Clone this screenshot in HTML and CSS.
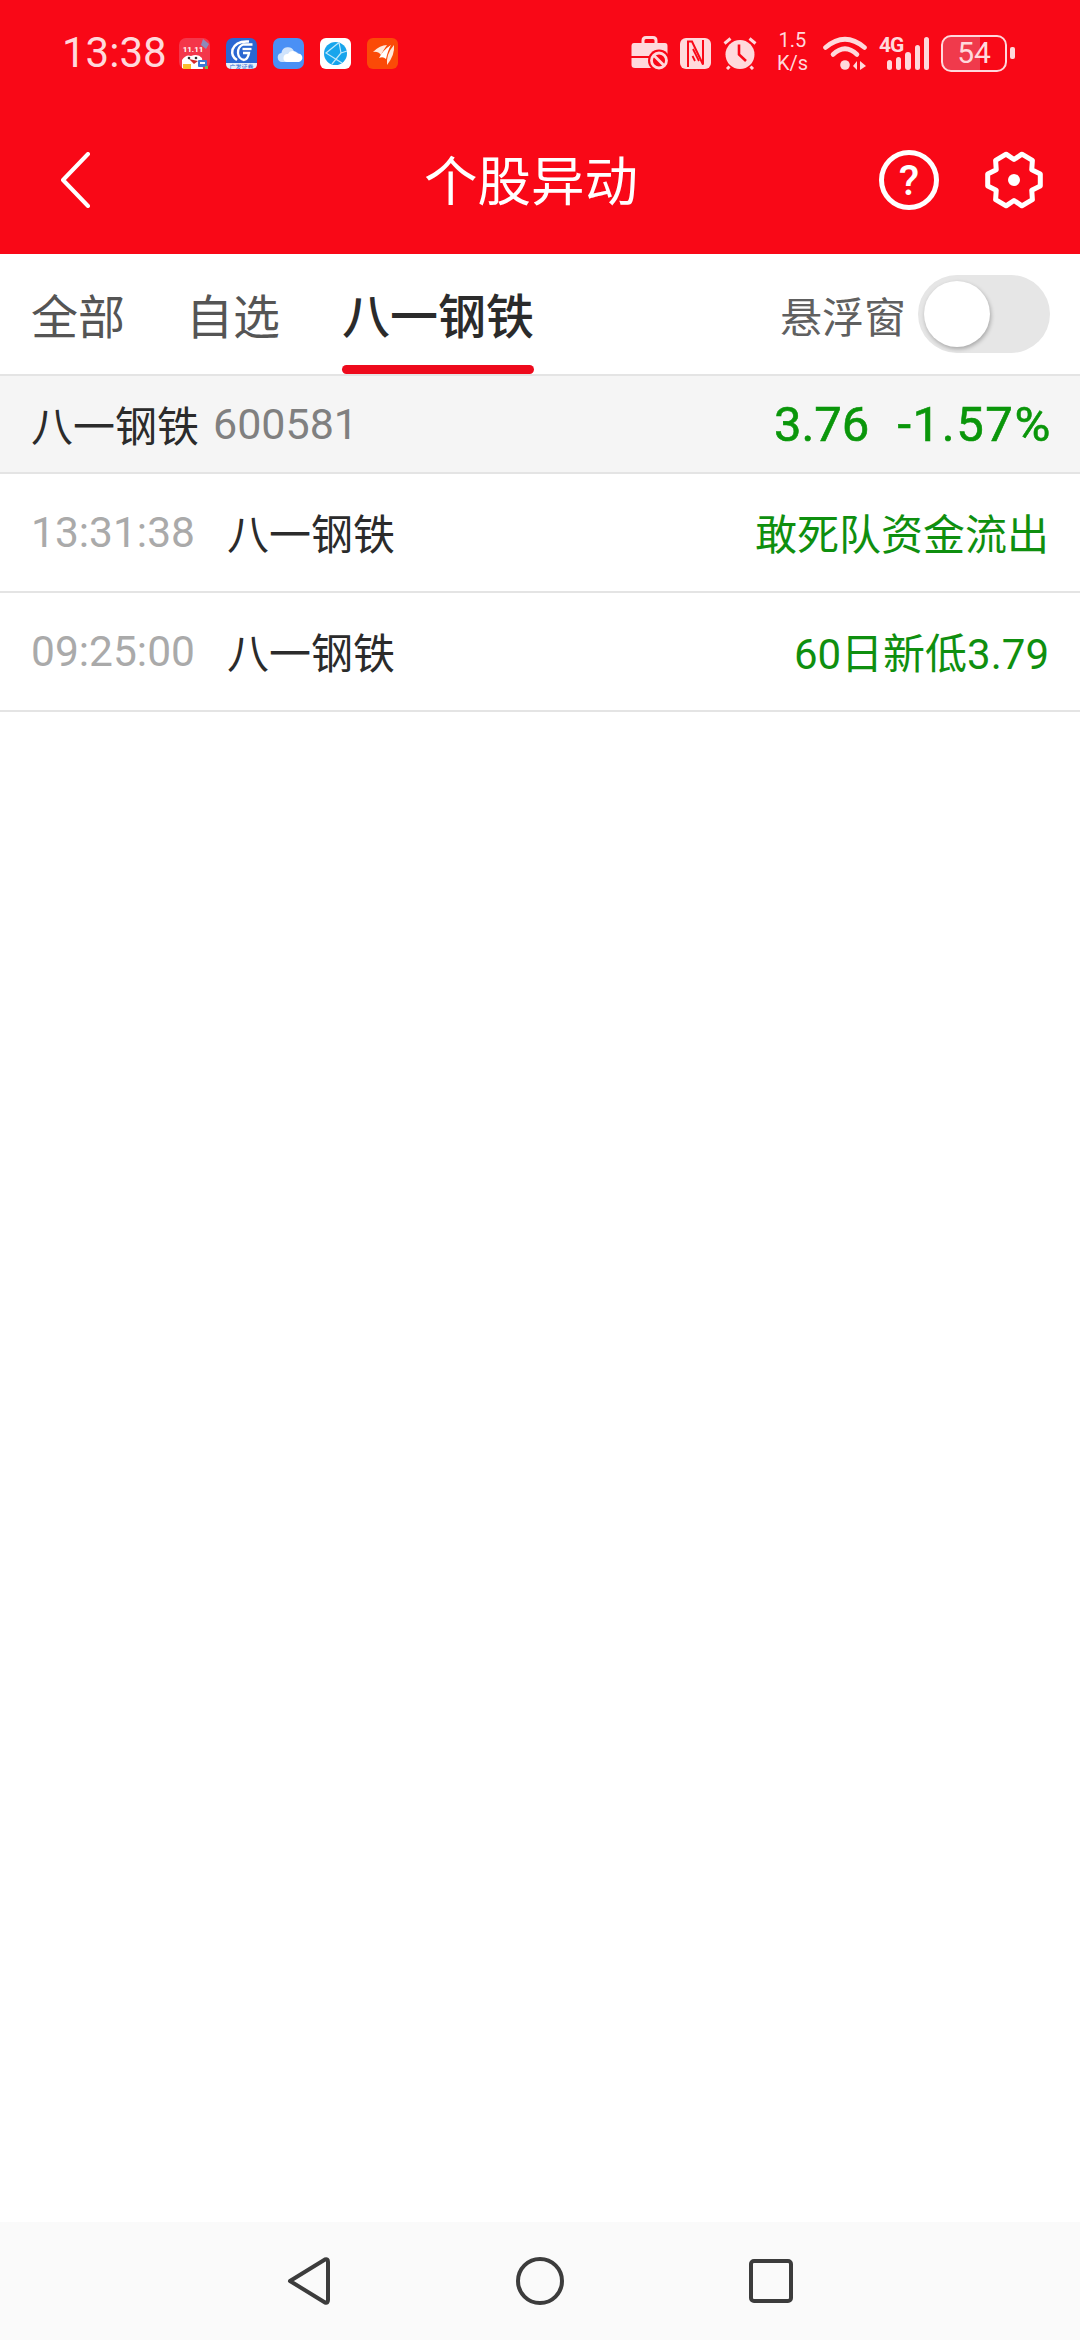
FILE: index.html
```html
<!DOCTYPE html>
<html lang="zh-CN">
<head>
    <meta charset="UTF-8">
    <meta name="viewport" content="width=device-width, initial-scale=1.0">
    <title>个股异动</title>
    <link rel="stylesheet" href="styles.css">
</head>
<body>
    <div id="page">
        <div class="top">
            <!-- status bar -->
            <div class="status">
                <span class="clock">13:38</span>
                <div class="apps">
                    <svg class="app" viewBox="0 0 31 31">
                        <rect width="31" height="31" rx="7" fill="#f4364a"/>
                        <path d="M24 1 30 6 27 11 22 7Z" fill="#8e8ab8"/>
                        <text class="app-sale" x="14" y="14">11.11</text>
                        <path d="M3 30 3 22Q7 16 12 18 19 15 23 20L24 31H5Z" fill="#fff"/>
                        <path d="M10 21 19 23 15 26Z" fill="#d32a2a"/>
                        <circle cx="10" cy="20" r="1.300" fill="#333"/>
                        <circle cx="17" cy="20" r="1.300" fill="#333"/>
                        <rect x="4" y="26" width="8" height="5" fill="#f9bd2c"/>
                        <rect x="19" y="22" width="9" height="7" rx="1" fill="#3d7bd6"/>
                        <rect x="21" y="24" width="5" height="2" fill="#fff"/>
                        <rect x="26" y="28" width="3" height="3" fill="#7cc04b"/>
                    </svg>
                    <svg class="app" viewBox="0 0 31 31">
                        <rect width="31" height="31" rx="7" fill="#2b67d2"/>
                        <path d="M0 25H31V26Q31 31 25 31H6Q0 31 0 26Z" fill="#e6effb"/>
                        <text class="app-broker" x="15.500" y="30.500">广发证券</text>
                        <path d="M23 3.500Q10 2.500 6.500 11.500 5 18.500 11 22" fill="none" stroke="#fff" stroke-width="2.500"/>
                        <path d="M26.500 6.500H17Q11.500 9 12 15 12.500 21 18 22 22 21 23 15H17" fill="none" stroke="#fff" stroke-width="2.300"/>
                        <path d="M25.500 11H16.500" stroke="#fff" stroke-width="2.300"/>
                    </svg>
                    <svg class="app" viewBox="0 0 31 31">
                        <rect width="31" height="31" rx="7" fill="#4a90f5"/>
                        <path d="M9 24a4.600 4.600 0 0 1-.6-9.100 6.600 6.600 0 0 1 12.600-1.700 5.500 5.500 0 0 1 1 10.800Z" fill="#cfe3fc"/>
                        <path d="M14 24a4 4 0 0 1 1-8 5 5 0 0 1 9-.5 4.300 4.300 0 0 1 2 8.500Z" fill="#fff"/>
                    </svg>
                    <svg class="app" viewBox="0 0 31 31">
                        <rect width="31" height="31" rx="6" fill="#fff"/>
                        <circle cx="15.500" cy="15.500" r="11.500" fill="#17a5ec"/>
                        <path d="M19 4.500 6 15 22 25M19 4.500 21 15 12 26M21 15 27 13" fill="none" stroke="#bfe8fb" stroke-width="1.200"/>
                    </svg>
                    <svg class="app" viewBox="0 0 31 31">
                        <rect width="31" height="31" rx="6" fill="#fb4a07"/>
                        <path d="M6 14Q13 7 20 7 17 11 14 17 11 13 6 14Z" fill="#ffe9dc"/>
                        <path d="M12 20Q16 12 24 7 21 12 19 21 16 18 12 20Z" fill="#fff"/>
                        <path d="M20 27Q19 16 27 7 28 17 20 27Z" fill="#ffe9dc"/>
                    </svg>
                </div>
                <div class="indicators">
                    <svg class="ind-case" viewBox="0 0 37 34">
                        <path d="M12 8V4.500Q12 1.500 15 1.500H22Q25 1.500 25 4.500V8" fill="none" stroke="currentColor" stroke-width="3"/>
                        <path d="M3 7H34Q36.500 7 36.500 10V20H0.500V10Q0.500 7 3 7Z" fill="currentColor"/>
                        <path d="M0.500 22H20V32H4Q0.500 32 0.500 29Z" fill="currentColor"/>
                        <circle cx="28" cy="24.500" r="11" fill="#f90817"/>
                        <circle cx="28" cy="24.500" r="7.500" fill="none" stroke="currentColor" stroke-width="2.800"/>
                        <path d="M23 19.500 33 29.500" stroke="currentColor" stroke-width="2.800"/>
                    </svg>
                    <svg class="ind-nfc" viewBox="0 0 31 31">
                        <rect width="31" height="31" rx="6" fill="currentColor"/>
                        <path d="M8 29V3.500H12L23 26.500V2" fill="none" stroke="#f90817" stroke-width="2"/>
                        <path d="M13 11 19 23M12.500 18 15 23" stroke="#f90817" stroke-width="1.800"/>
                    </svg>
                    <svg class="ind-alarm" viewBox="0 0 34 34">
                        <circle cx="17" cy="18.500" r="14.500" fill="currentColor"/>
                        <path d="M16 8.500V18.500L23 25" fill="none" stroke="#f90817" stroke-width="2.600"/>
                        <path d="M1.500 7.500 7.500 2.500M32.500 7.500 26.500 2.500M6.500 30.500 4 33M27.500 30.500 30 33" stroke="currentColor" stroke-width="3"/>
                    </svg>
                    <div class="speed">1.5<br>K/s</div>
                    <svg class="ind-wifi" viewBox="0 0 44 34">
                        <path d="M2.500 11.500Q22 -5 41.500 11.500" fill="none" stroke="currentColor" stroke-width="4.600" stroke-linecap="round"/>
                        <path d="M10 18.500Q22 7 34 18.500" fill="none" stroke="currentColor" stroke-width="4.600" stroke-linecap="round"/>
                        <circle cx="22" cy="29" r="4.800" fill="currentColor"/>
                        <path d="M30 30 34 25V34ZM37 25 43 30 37 34Z" fill="currentColor"/>
                    </svg>
                    <div class="signal">
                        <span class="net">4G</span>
                        <i class="s1"></i><i class="s2"></i><i class="s3"></i><i class="s4"></i><i class="s5"></i>
                    </div>
                    <div class="battery">
                        <div class="shell"><span>54</span></div>
                        <div class="nub"></div>
                    </div>
                </div>
            </div>
            <!-- title bar -->
            <div class="titlebar">
                <svg class="back" viewBox="0 0 30 56">
                    <path d="M27 2 2 28 27 54" fill="none" stroke="#fff" stroke-width="4" stroke-linecap="round" stroke-linejoin="round"/>
                </svg>
                <h1>个股异动</h1>
                <div class="actions">
                    <svg class="ico-help" viewBox="0 0 60 60">
                        <circle cx="30" cy="30" r="27.500" fill="none" stroke="#fff" stroke-width="5"/>
                        <text x="30" y="45" text-anchor="middle">?</text>
                    </svg>
                    <svg class="ico-gear" viewBox="0 0 60 60">
                        <path d="M56.300 23.900 47.750 19.750 48.400 10.300 37.900 4.200 30 9.500 22.100 4.200 11.600 10.300 12.250 19.750 3.700 23.900V36.100L12.250 40.250 11.600 49.700 22.100 55.800 30 50.500 37.900 55.800 48.400 49.700 47.750 40.250 56.300 36.100Z" fill="none" stroke="#fff" stroke-width="5" stroke-linejoin="round"/>
                        <circle cx="30" cy="30" r="6" fill="#fff"/>
                    </svg>
                </div>
            </div>
        </div>

        <div class="tabs">
            <span class="tab">全部</span>
            <span class="tab">自选</span>
            <span class="tab active">八一钢铁</span>
            <div class="float-opt">
                <span>悬浮窗</span>
                <div class="toggle"><div class="knob"></div></div>
            </div>
        </div>

        <div class="stock">
            <span class="stock-name">八一钢铁</span>
            <span class="stock-code">600581</span>
            <span class="stock-price">3.76</span>
            <span class="stock-pct">-1.57%</span>
        </div>

        <div class="row">
            <span class="time">13:31:38</span>
            <span class="name">八一钢铁</span>
            <span class="event">敢死队资金流出</span>
        </div>
        <div class="row">
            <span class="time">09:25:00</span>
            <span class="name">八一钢铁</span>
            <span class="event">60日新低3.79</span>
        </div>

        <div class="empty"></div>

        <div class="navbar">
            <svg class="nav-ico" viewBox="0 0 48 48">
                <path d="M5 24 40 2.500Q43 1.500 43 5V43Q43 46.500 40 45.500Z" fill="none" stroke="#3c3c3c" stroke-width="4" stroke-linejoin="round"/>
            </svg>
            <svg class="nav-ico" viewBox="0 0 48 48">
                <circle cx="24" cy="24" r="22" fill="none" stroke="#3c3c3c" stroke-width="4"/>
            </svg>
            <svg class="nav-ico" viewBox="0 0 48 48">
                <rect x="4" y="4" width="40" height="40" rx="3" fill="none" stroke="#3c3c3c" stroke-width="4"/>
            </svg>
        </div>
    </div>
</body>
</html>
```

FILE: styles.css
```css
*{
    box-sizing: border-box;
    margin: 0px;
    padding: 0px;
}
body{
    background-color: #fff;
    font-family: Roboto, "Noto Sans CJK SC", sans-serif;
}
#page{
    width: 1080px;
    height: 2340px;
    display: flex;
    flex-direction: column;
    overflow: hidden;
}
.top{
    background-color: #f90817;
    color: #fff;
}
.status{
    height: 106px;
    display: flex;
    align-items: center;
    padding: 0px 65px 0px 62px;
    color: #ffd9dc;
}
.clock{
    font-size: 42px;
    width: 117px;
    line-height: 1;
}
.apps{
    display: flex;
    gap: 16px;
}
.app{
    width: 31px;
    height: 31px;
    display: block;
}
.app-sale{
    fill: #fff;
    font-size: 8px;
    font-weight: 700;
    text-anchor: middle;
}
.app-broker{
    fill: #2b67d2;
    font-size: 6px;
    text-anchor: middle;
}
.indicators{
    margin-left: auto;
    display: flex;
    align-items: center;
}
.ind-case{
    width: 37px;
    height: 34px;
    margin-right: 12px;
}
.ind-nfc{
    width: 31px;
    height: 31px;
    margin-right: 12px;
}
.ind-alarm{
    width: 34px;
    height: 34px;
    margin-right: 19px;
}
.speed{
    width: 33px;
    margin-right: 14px;
    margin-bottom: 2px;
    text-align: center;
    font-size: 20px;
    line-height: 23.5px;
    white-space: nowrap;
}
.ind-wifi{
    width: 44px;
    height: 34px;
    margin-right: 12px;
}
.signal{
    width: 50px;
    height: 33px;
    margin-right: 12px;
    display: flex;
    align-items: flex-end;
    gap: 3.9px;
    position: relative;
}
.net{
    position: absolute;
    left: 0px;
    top: -1px;
    font-size: 21px;
    line-height: 18px;
    font-weight: 700;
    letter-spacing: -1px;
}
.signal i{
    display: block;
    width: 5.6px;
    border-radius: 3px;
    background-color: #ffd9dc;
}
.signal .s1{
    height: 10px;
    margin-left: 8px;
}
.signal .s2{
    height: 13px;
}
.signal .s3{
    height: 18px;
}
.signal .s4{
    height: 25px;
}
.signal .s5{
    height: 33px;
}
.battery{
    display: flex;
    align-items: center;
    gap: 3px;
}
.shell{
    width: 66px;
    height: 37px;
    border: 2px solid #ffd9dc;
    border-radius: 10px;
    background: linear-gradient(90deg, #f03a4c 0px, #f03a4c 37px, transparent 37px);
    display: flex;
    align-items: center;
    justify-content: center;
    font-size: 30px;
    line-height: 1;
}
.nub{
    width: 5px;
    height: 12px;
    border-radius: 2px;
    background-color: #ffd9dc;
}
.titlebar{
    height: 148px;
    display: flex;
    align-items: center;
    justify-content: space-between;
    padding: 0px 36px 0px 61px;
    position: relative;
}
.back{
    width: 30px;
    height: 56px;
}
.titlebar h1{
    position: absolute;
    left: 0px;
    right: 0px;
    top: 39px;
    padding-right: 18px;
    text-align: center;
    font-size: 53.5px;
    font-weight: 400;
    line-height: 76px;
}
.actions{
    display: flex;
    align-items: center;
    gap: 45px;
}
.ico-help, .ico-gear{
    width: 60px;
    height: 60px;
    display: block;
}
.ico-help text{
    fill: #fff;
    font-family: Roboto, sans-serif;
    font-size: 42px;
    font-weight: 500;
}
.tabs{
    height: 122px;
    display: flex;
    align-items: stretch;
    padding: 0px 30px 0px 31px;
    border-bottom: 2px solid #e4e4e4;
}
.tab{
    position: relative;
    display: flex;
    align-items: center;
    padding-bottom: 2px;
    font-size: 47px;
    color: #555;
    margin-right: 61px;
}
.tab:nth-child(2){
    margin-right: 62px;
}
.tab.active{
    color: #2b2b2b;
    font-size: 48px;
    font-weight: 500;
    margin-right: 0px;
}
.tab.active::after{
    content: '';
    position: absolute;
    left: 0px;
    right: 0px;
    bottom: 0px;
    height: 9px;
    border-radius: 5px;
    background-color: #ee0a1c;
}
.float-opt{
    margin-left: auto;
    display: flex;
    align-items: center;
    gap: 12px;
    font-size: 42px;
    color: #606060;
}
.toggle{
    width: 132px;
    height: 78px;
    border-radius: 39px;
    background-color: #e6e6e6;
    padding: 6px;
}
.knob{
    width: 66px;
    height: 66px;
    border-radius: 50%;
    background-color: #fff;
    box-shadow: 1px 2px 4px rgba(0,0,0,0.28);
}
.stock{
    height: 98px;
    display: flex;
    align-items: center;
    padding: 0px 28px 0px 31px;
    background-color: #f5f5f5;
    border-bottom: 2px solid #e4e4e4;
}
.stock-name{
    font-size: 42px;
    color: #2b2b2b;
    padding-bottom: 2px;
}
.stock-code{
    font-size: 43px;
    color: #808080;
    margin-left: 14px;
}
.stock-price{
    margin-left: auto;
    font-size: 49px;
    color: #0a960a;
    -webkit-text-stroke: 0.6px #0a960a;
}
.stock-pct{
    margin-left: 28px;
    font-size: 49px;
    letter-spacing: 1.6px;
    color: #0a960a;
    -webkit-text-stroke: 0.6px #0a960a;
}
.row{
    height: 119px;
    display: flex;
    align-items: center;
    padding: 0px 31px;
    border-bottom: 2px solid #e4e4e4;
    font-size: 42px;
}
.time{
    width: 196px;
    font-size: 42.5px;
    color: #aaa;
}
.name{
    color: #2b2b2b;
    padding-bottom: 2px;
}
.event{
    margin-left: auto;
    color: #0f8f0f;
    padding-bottom: 2px;
}
.empty{
    flex: 1;
}
.navbar{
    height: 118px;
    background-color: #fafafa;
    display: flex;
    align-items: center;
    justify-content: center;
    gap: 183px;
}
.nav-ico{
    width: 48px;
    height: 48px;
}
```
